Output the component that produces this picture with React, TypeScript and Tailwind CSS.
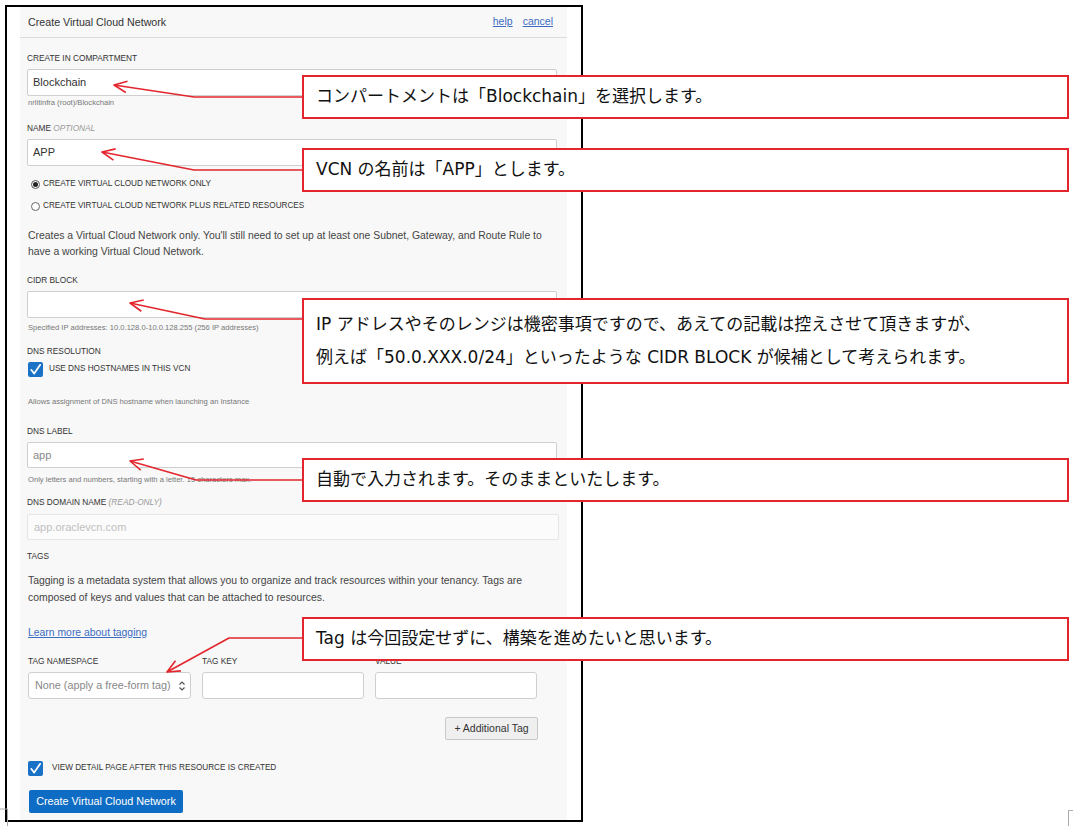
import React from "react";

type Pt = [number, number];

const ARROWS: { tip: Pt; bend: Pt; end: Pt }[] = [
  { tip: [114, 85], bend: [194, 97], end: [303, 97] },
  { tip: [102, 152], bend: [194, 170], end: [303, 170] },
  { tip: [130, 303], bend: [205, 319], end: [303, 319] },
  { tip: [130, 461], bend: [196, 480], end: [303, 480] },
  { tip: [167, 672], bend: [229, 638], end: [303, 638] },
];

function head(tip: Pt, from: Pt, len = 14, spread = 0.42) {
  const a = Math.atan2(from[1] - tip[1], from[0] - tip[0]);
  const p1: Pt = [tip[0] + len * Math.cos(a + spread), tip[1] + len * Math.sin(a + spread)];
  const p2: Pt = [tip[0] + len * Math.cos(a - spread), tip[1] + len * Math.sin(a - spread)];
  return `M${p1[0]} ${p1[1]} L${tip[0]} ${tip[1]} L${p2[0]} ${p2[1]}`;
}

function Label({ children }: { children: React.ReactNode }) {
  return <div className="h-[10px] text-[8.3px] leading-[10px] text-[#333] uppercase">{children}</div>;
}

function Helper({ children, className = "" }: { children: React.ReactNode; className?: string }) {
  return <div className={"h-[8px] text-[7.6px] leading-[8px] text-[#777] " + className}>{children}</div>;
}

function Check() {
  return (
    <div className="w-[15px] h-[15px] rounded-[2px] bg-[#1a72c6] flex items-center justify-center shrink-0">
      <svg width="13" height="13" viewBox="0 0 13 13">
        <path d="M2.2 6.8 L5.2 10.6 L11.2 1.8" fill="none" stroke="white" strokeWidth="1.7" strokeLinecap="round" strokeLinejoin="round" />
      </svg>
    </div>
  );
}

function Callout({ className, children }: { className: string; children: React.ReactNode }) {
  return (
    <div
      className={
        "absolute left-[302px] w-[767px] bg-white border-2 border-[#e3262d] pl-[12px] flex flex-col justify-center text-[17px] text-[#111] font-['DejaVu_Sans','Noto_Sans_CJK_JP',sans-serif] " +
        className
      }
    >
      {children}
    </div>
  );
}

export default function App() {
  return (
    <div className="relative w-[1073px] h-[826px] bg-white overflow-hidden font-['Liberation_Sans',Arial,sans-serif]">
      <div className="pl-[5px] pt-[5px]">
        <div className="w-[578px] h-[817px] border-2 border-black bg-white pl-[13px] pr-[14px]">
          <div className="h-full bg-[#f8f8f8]">
            <div className="h-[31px] flex items-center justify-between border-b border-[#dcdcdc] px-[8px] pr-[14px]">
              <span className="text-[10.7px] text-[#333]">Create Virtual Cloud Network</span>
              <div className="flex gap-[10px] text-[10.5px] text-[#3b6cc0] underline">
                <span>help</span>
                <span>cancel</span>
              </div>
            </div>

            <div className="px-[7px]">
              <div className="mt-[15px]">
                <Label>Create in compartment</Label>
              </div>
              <div className="mt-[6px] h-[27px] w-[530px] bg-white border border-[#cfcfcf] rounded-[2px] flex items-center px-[5px] text-[11px] text-[#333]">
                Blockchain
              </div>
              <Helper className="mt-[3px] pl-[1px]">nrlitinfra (root)/Blockchain</Helper>

              <div className="mt-[16px]">
                <Label>
                  Name <span className="italic text-[#999]">optional</span>
                </Label>
              </div>
              <div className="mt-[6px] h-[27px] w-[530px] bg-white border border-[#cfcfcf] rounded-[2px] flex items-center px-[5px] text-[11px] text-[#333]">
                APP
              </div>

              <div className="mt-[12px] h-[12px] flex items-center gap-[3px] pl-[4px]">
                <div className="w-[9px] h-[9px] rounded-full border border-[#555] bg-white flex items-center justify-center">
                  <div className="w-[5px] h-[5px] rounded-full bg-[#222]" />
                </div>
                <span className="text-[8.2px] text-[#333] uppercase">Create virtual cloud network only</span>
              </div>
              <div className="mt-[10px] h-[12px] flex items-center gap-[3px] pl-[4px]">
                <div className="w-[9px] h-[9px] rounded-full border border-[#666] bg-white" />
                <span className="text-[8.2px] text-[#333] uppercase">Create virtual cloud network plus related resources</span>
              </div>

              <p className="mt-[16px] w-[535px] text-[10.4px] leading-[16px] text-[#444] pl-[1px]">
                Creates a Virtual Cloud Network only. You'll still need to set up at least one Subnet, Gateway, and Route Rule to have a working Virtual Cloud Network.
              </p>

              <div className="mt-[15px]">
                <Label>CIDR Block</Label>
              </div>
              <div className="mt-[6px] h-[27px] w-[530px] bg-white border border-[#cfcfcf] rounded-[2px]" />
              <Helper className="mt-[6px] pl-[1px]">Specified IP addresses: 10.0.128.0-10.0.128.255 (256 IP addresses)</Helper>

              <div className="mt-[14px]">
                <Label>DNS Resolution</Label>
              </div>
              <div className="mt-[6px] h-[15px] flex items-center gap-[6px] pl-[1px]">
                <Check />
                <span className="text-[8.2px] text-[#333] uppercase">Use DNS hostnames in this VCN</span>
              </div>
              <Helper className="mt-[21px] pl-[1px]">Allows assignment of DNS hostname when launching an Instance</Helper>

              <div className="mt-[20px]">
                <Label>DNS Label</Label>
              </div>
              <div className="mt-[6px] h-[26px] w-[530px] bg-white border border-[#cfcfcf] rounded-[2px] flex items-center px-[5px] text-[11px] text-[#888]">
                app
              </div>
              <Helper className="mt-[8px] pl-[1px]">Only letters and numbers, starting with a letter. 15 characters max.</Helper>

              <div className="mt-[13px]">
                <Label>
                  DNS Domain Name <span className="italic text-[#999]">(read-only)</span>
                </Label>
              </div>
              <div className="mt-[7px] h-[26px] w-[532px] bg-[#fbfbfb] border border-[#e6e6e6] rounded-[2px] flex items-center px-[6px] text-[11px] text-[#c0c0c0]">
                app.oraclevcn.com
              </div>

              <div className="mt-[11px]">
                <Label>Tags</Label>
              </div>
              <p className="mt-[11px] w-[535px] text-[10.4px] leading-[17px] text-[#444] pl-[1px]">
                Tagging is a metadata system that allows you to organize and track resources within your tenancy. Tags are composed of keys and values that can be attached to resources.
              </p>

              <div className="mt-[20px] h-[14px] leading-[14px] text-[10.4px] text-[#3b6cc0] underline pl-[1px]">Learn more about tagging</div>

              <div className="ml-[1px] w-[510px]">
                <div className="mt-[16px] grid grid-cols-[163px_162px_162px] gap-x-[11px]">
                  <Label>Tag namespace</Label>
                  <Label>Tag key</Label>
                  <Label>Value</Label>
                </div>
                <div className="mt-[6px] grid grid-cols-[163px_162px_162px] gap-x-[11px]">
                  <div className="h-[27px] bg-white border border-[#cfcfcf] rounded-[3px] flex items-center justify-between pl-[6px] pr-[4px] text-[10.8px] text-[#888]">
                    <span>None (apply a free-form tag)</span>
                    <svg width="8" height="12" viewBox="0 0 8 12">
                      <path d="M1.5 4.5 L4 2 L6.5 4.5 M1.5 7.5 L4 10 L6.5 7.5" fill="none" stroke="#555" strokeWidth="1.2" />
                    </svg>
                  </div>
                  <div className="h-[27px] bg-white border border-[#cfcfcf] rounded-[3px]" />
                  <div className="h-[27px] bg-white border border-[#cfcfcf] rounded-[3px]" />
                </div>
                <div className="mt-[18px] flex justify-end">
                  <div className="h-[23px] w-[93px] bg-[#efefef] border border-[#c8c8c8] rounded-[2px] flex items-center justify-center text-[10.5px] text-[#333]">
                    + Additional Tag
                  </div>
                </div>
              </div>

              <div className="mt-[20px] h-[16px] flex items-center gap-[9px] pl-[1px]">
                <Check />
                <span className="text-[8.2px] text-[#333] uppercase">View detail page after this resource is created</span>
              </div>

              <div className="mt-[14px] ml-[2px] h-[23px] w-[154px] bg-[#0f6cc4] rounded-[2px] flex items-center justify-center text-[10.8px] text-white">
                Create Virtual Cloud Network
              </div>
            </div>
          </div>
        </div>
      </div>

      <Callout className="top-[75px] h-[44px]">
        <span>コンパートメントは「Blockchain」を選択します。</span>
      </Callout>
      <Callout className="top-[148px] h-[44px]">
        <span>VCN の名前は「APP」とします。</span>
      </Callout>
      <Callout className="top-[298px] h-[86px] gap-[8px]">
        <span>IP アドレスやそのレンジは機密事項ですので、あえての記載は控えさせて頂きますが、</span>
        <span>例えば「50.0.XXX.0/24」といったような CIDR BLOCK が候補として考えられます。</span>
      </Callout>
      <Callout className="top-[458px] h-[44px]">
        <span>自動で入力されます。そのままといたします。</span>
      </Callout>
      <Callout className="top-[617px] h-[44px]">
        <span>Tag は今回設定せずに、構築を進めたいと思います。</span>
      </Callout>

      <svg className="absolute inset-0 pointer-events-none" width="1073" height="826">
        {ARROWS.map((a, i) => (
          <g key={i} fill="none" stroke="#e3262d" strokeWidth="1.6" strokeLinejoin="round">
            <path d={`M${a.end[0]} ${a.end[1]} L${a.bend[0]} ${a.bend[1]} L${a.tip[0]} ${a.tip[1]}`} />
            <path d={head(a.tip, a.bend)} />
          </g>
        ))}
        <path d="M0 809 L7.5 809 L7.5 826" fill="none" stroke="#aaa" strokeWidth="1" />
        <path d="M1073 810.5 L1068.5 810.5 L1068.5 826" fill="none" stroke="#aaa" strokeWidth="1" />
      </svg>
    </div>
  );
}
